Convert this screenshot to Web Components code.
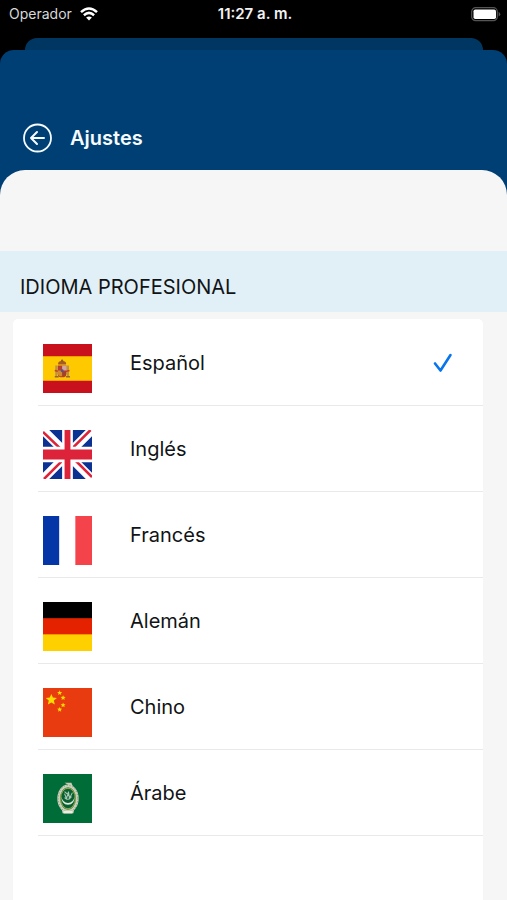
<!DOCTYPE html>
<html lang="es">
<head>
<meta charset="utf-8">
<meta name="viewport" content="width=device-width, initial-scale=1">
<title>Ajustes</title>
<style>
html { height: 100%; background: #000; }
body { margin: 0; min-height: 100%; display: flex; flex-direction: column; font-family: Inter, "Liberation Sans", sans-serif; color: #111416; }
settings-screen { flex: 1; }
</style>
</head>
<body>
<status-bar carrier="Operador" time="11:27 a. m."></status-bar>
<settings-screen>
  <nav-header slot="header">Ajustes</nav-header>
  <section-title>IDIOMA PROFESIONAL</section-title>
  <language-list></language-list>
</settings-screen>
<script>
class BaseElement extends HTMLElement {
  connectedCallback() {
    if (this.shadowRoot) return;
    this.attachShadow({ mode: 'open' }).innerHTML = this.render();
  }
}

customElements.define('status-bar', class extends BaseElement {
  render() {
    return `<style>
      :host { display: grid; grid-template-columns: 1fr auto 1fr; align-items: center; height: 28px; padding: 0 6px 0 9px; background: #000; color: #f2f2f2; font-size: 14px; line-height: 20px; box-sizing: border-box; }
      .left { display: flex; align-items: center; gap: 8px; color: #d8d8d8; }
      .time { font-size: 15px; font-weight: 600; }
      .battery { justify-self: end; }
      svg { display: block; }
    </style>
    <div class="left"><span>${this.getAttribute('carrier')}</span>
      <svg width="18" height="14" viewBox="0 0 18 14" fill="none" stroke="#fff" stroke-width="2.5" aria-hidden="true"><path d="M1 5.2Q9-2.2 17 5.2M3.9 8.2Q9 3.6 14.1 8.2"/><path d="M6.1 10.6Q9 8.2 11.9 10.6L9 13.6Z" fill="#fff" stroke="none"/></svg>
    </div>
    <span class="time">${this.getAttribute('time')}</span>
    <svg class="battery" width="30" height="15" viewBox="0 0 30 15" aria-hidden="true"><rect x=".7" y=".7" width="25.6" height="13" rx="4" fill="#000" stroke="#555" stroke-width="1.2"/><rect x="2.5" y="2.5" width="22.5" height="9.5" rx="1.8" fill="#fff"/><path d="M27.6 4.8Q31 7.2 27.6 9.6Z" fill="#555"/></svg>`;
  }
});

customElements.define('settings-screen', class extends BaseElement {
  render() {
    return `<style>
      :host { display: flex; flex-direction: column; padding-top: 10px; background: #000; }
      .behind { height: 12px; margin: 0 24px 0 25px; border-radius: 12px 12px 0 0; background: #003762; }
      .sheet { flex: 1; display: flex; flex-direction: column; border-radius: 14px 14px 0 0; background: linear-gradient(#003f73 200px, #f6f6f6 200px); }
      main { flex: 1; display: flex; flex-direction: column; padding-top: 81px; border-radius: 25px 25px 0 0; background: #f6f6f6; }
    </style>
    <div class="behind"></div>
    <div class="sheet"><slot name="header"></slot><main><slot></slot></main></div>`;
  }
});

customElements.define('nav-header', class extends BaseElement {
  render() {
    return `<style>
      :host { display: flex; align-items: center; gap: 18px; height: 120px; padding: 72px 22px 16px; box-sizing: border-box; color: #f5fbff; }
      button { padding: 0; border: 0; background: none; color: inherit; cursor: pointer; }
      svg { display: block; }
      h1 { margin: 0; font-size: 20px; line-height: 28px; font-weight: 600; }
    </style>
    <button type="button" aria-label="Volver"><svg width="30" height="30" viewBox="0 0 30 30" fill="none" stroke="currentColor" stroke-width="2" stroke-linecap="round" stroke-linejoin="round"><circle cx="15.5" cy="15" r="13.5" stroke-width="1.8"/><path d="M22 15H9M15 9L9 15L15 21"/></svg></button>
    <h1><slot></slot></h1>`;
  }
});

customElements.define('section-title', class extends BaseElement {
  render() {
    return `<style>
      :host { display: block; padding: 22px 20px 11px; background: #e1eff6; }
      h2 { margin: 0; font-size: 20px; line-height: 28px; font-weight: 400; }
    </style><h2><slot></slot></h2>`;
  }
});

const star = (cx, cy, r) => `<polygon fill="#ffdc00" points="${Array.from({ length: 10 }, (_, i) => {
  const a = -Math.PI / 2 + i * Math.PI / 5, q = i % 2 ? r * 0.45 : r;
  return (cx + q * Math.cos(a)).toFixed(2) + ',' + (cy + q * Math.sin(a)).toFixed(2);
}).join(' ')}"/>`;

const flags = {
  es: `<rect width="50" height="50" fill="#c9101d"/><rect y="12.5" width="50" height="25" fill="#ffc900"/>
    <path d="M13.5 22v11M25.5 22v11" stroke="#b8905d" stroke-width="2"/><path d="M12 33.5h4M23.5 33.5h4" stroke="#986333" stroke-width="1.5"/>
    <path d="M12 27l4 1M23 28l4-1" stroke="#c54022" stroke-width="1.6"/>
    <path d="M15.5 21Q14.5 17.5 19.5 17Q24.5 17.5 23.5 21Z" fill="#a85a24"/><circle cx="19.5" cy="17" r="1.2" fill="#925b26"/>
    <path d="M15 22h9v8q0 4-4.5 4T15 30Z" fill="#b83e2b"/><path d="M19.5 22H24v5h-4.5Z" fill="#d6a699"/><path d="M15 27h4.5v6q-4.5 0-4.5-4Z" fill="#d18c2a"/><path d="M20.5 28v5M22.5 28v4" stroke="#8d472d"/><circle cx="19.5" cy="27.3" r="1.5" fill="#53558a"/>`,
  gb: `<rect width="50" height="50" fill="#0b3192"/><path d="M0 0L50 50M50 0L0 50" stroke="#fff" stroke-width="9"/>
    <path d="M0 2L21 22M48.5 0L28 20.5M50 48L28 26M1 50L22 29" stroke="#dc2339" stroke-width="2.6"/>
    <path d="M25 0v50" stroke="#fff" stroke-width="11"/><path d="M0 25h50" stroke="#fff" stroke-width="16"/><path d="M25 0v50" stroke="#dc2339" stroke-width="6"/><path d="M0 25h50" stroke="#dc2339" stroke-width="10"/>`,
  fr: `<rect width="50" height="50" fill="#fff"/><rect width="16.5" height="50" fill="#0536a7"/><rect x="33" width="17" height="50" fill="#f5434b"/>`,
  de: `<rect width="50" height="50" fill="#ffd000"/><rect width="50" height="33" fill="#e52200"/><rect width="50" height="16.5" fill="#000"/>`,
  cn: `<rect width="50" height="50" fill="#e83b10"/>` + star(8.5, 12, 6) + star(17, 5, 2.7) + star(20.5, 10, 2.7) + star(20.5, 17.5, 2.7) + star(17, 22, 2.7),
  ar: `<rect width="50" height="50" fill="#006c38"/>
    <path d="M22 9h7l2 5M20 40l-1-5h13l-1 5Z" fill="#c9cdb7"/><ellipse cx="25.5" cy="25" rx="9.5" ry="13" fill="#35823c" stroke="#cbd0bd" stroke-width="2.8"/>
    <ellipse cx="25.5" cy="25" rx="10" ry="13.5" fill="none" stroke="#758b5f" stroke-width="1" stroke-dasharray="1 2"/>
    <ellipse cx="25.5" cy="25" rx="7.5" ry="10.5" fill="#075f32" stroke="#9cad4d"/>
    <path d="M19 23a6.7 6.7 0 1 0 13 0a5.7 5.7 0 0 1-13 0Z" fill="#e2e9dc"/><path d="M22 20l2 5 2-7 1 7 3-6M22 24q4 4 7-1M22 18l7 6" fill="none" stroke="#aac9b2" stroke-width="1.1"/>
    <path d="M21 39h9" stroke="#eceddf" stroke-width="2.5"/>`
};

customElements.define('flag-icon', class extends BaseElement {
  render() {
    return `<style>:host { display: block; width: 50px; height: 50px; } svg { display: block; width: 100%; height: 100%; }</style>
    <svg viewBox="0 0 50 50" aria-hidden="true">${flags[this.getAttribute('code')]}</svg>`;
  }
});

customElements.define('language-list', class extends BaseElement {
  render() {
    const items = [['es', 'Español'], ['gb', 'Inglés'], ['fr', 'Francés'], ['de', 'Alemán'], ['cn', 'Chino'], ['ar', 'Árabe']];
    return `<style>
      :host { display: block; flex: 1; margin: 7px 24px 0 13px; border-radius: 5px 5px 0 0; background: #fff; }
      fieldset { margin: 0; padding: 0 0 0 25px; border: 0; min-width: 0; }
      label { display: grid; grid-template-columns: 50px 1fr 20px; column-gap: 37px; height: 86px; padding: 0 30px 0 5px; border-bottom: 1px solid #e9e9e9; box-sizing: border-box; cursor: pointer; }
      label:first-child { height: 87px; }
      flag-icon { width: 49px; height: 49px; align-self: end; margin-bottom: 12px; }
      .name { align-self: end; margin-bottom: 28px; font-size: 20px; line-height: 28px; }
      .tick { display: grid; align-self: end; margin-bottom: 32px; }
      input, svg { grid-area: 1 / 1; width: 20px; height: 20px; margin: 0; }
      input { appearance: none; outline-offset: 4px; }
      svg { visibility: hidden; pointer-events: none; }
      input:checked + svg { visibility: visible; }
    </style>
    <fieldset aria-label="Idioma profesional">${items.map(([code, name], i) => `<label for="${code}"><flag-icon code="${code}"></flag-icon><span class="name">${name}</span><span class="tick"><input type="radio" id="${code}" name="idioma" value="${code}"${i ? '' : ' checked'}><svg viewBox="0 0 20 20" fill="none" stroke="#0875ed" stroke-width="2.6" stroke-linecap="round" stroke-linejoin="round"><path d="M2 10.5L7.500 17.500L17.500 2"/></svg></span></label>`).join('')}</fieldset>`;
  }
});
</script>
</body>
</html>
